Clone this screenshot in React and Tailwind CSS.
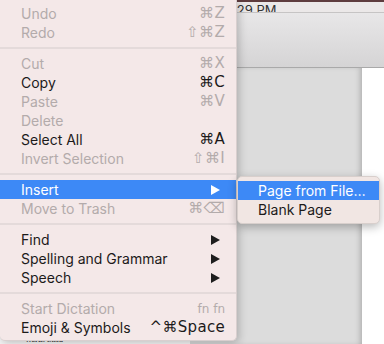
const FONT = { fontFamily: 'Inter, "DejaVu Sans", sans-serif' }

// ─── Menu data ────────────────────────────────────────────────────────────────

const ITEMS = [
  { label: 'Undo', key: '⌘Z', disabled: true },
  { label: 'Redo', key: '⇧⌘Z', disabled: true },
  { sep: true },
  { label: 'Cut', key: '⌘X', disabled: true },
  { label: 'Copy', key: '⌘C' },
  { label: 'Paste', key: '⌘V', disabled: true },
  { label: 'Delete', disabled: true },
  { label: 'Select All', key: '⌘A' },
  { label: 'Invert Selection', key: '⇧⌘I', disabled: true },
  { sep: true },
  { label: 'Insert', sub: true, active: true },
  { label: 'Move to Trash', key: '⌘⌫', disabled: true },
  { sep: true },
  { label: 'Find', sub: true },
  { label: 'Spelling and Grammar', sub: true },
  { label: 'Speech', sub: true },
  { sep: true },
  { label: 'Start Dictation', key: 'fn fn', disabled: true, small: true },
  { label: 'Emoji & Symbols', key: '^⌘Space' },
]

function Arrow({ white }) {
  return (
    <svg width="9" height="10" viewBox="0 0 9 10" className="shrink-0">
      <polygon points="0,0 9,5 0,10" fill={white ? '#ffffff' : '#1e1e1e'} />
    </svg>
  )
}

function Row({ item }) {
  const color = item.active ? 'text-white' : item.disabled ? 'text-[#b3abab]' : 'text-[#1c1a1a]'
  return (
    <div className={`h-[19px] flex items-center justify-between pl-[21px] pr-[11px] text-[14px] ${color} ${item.active ? 'bg-[#3d89f6]' : ''}`}>
      <span className="-mt-px">{item.label}</span>
      {item.sub && <span className="pr-[5px]"><Arrow white={item.active} /></span>}
      {item.key && (
        <span
          className={item.small ? 'text-[12px]' : 'text-[15px] tracking-[0.3px]'}
          style={{ fontFamily: '"DejaVu Sans", Inter, sans-serif' }}
        >
          {item.key}
        </span>
      )}
    </div>
  )
}

export default function App() {
  return (
    <div className="relative w-[384px] h-[344px] overflow-hidden bg-white" style={FONT}>

      {/* Backdrop — the app window behind the menu */}
      <div className="flex flex-col h-full">
        <div className="h-[2px] bg-[#5e3c3e]" />
        <div className="h-[10px] bg-[#ebe8e8] overflow-hidden pl-[233px]">
          <span className="block text-[13px] leading-[15px] text-[#333] mt-[1px]">:29 PM</span>
        </div>
        <div className="h-px bg-[#c6c4c4]" />
        <div className="h-[54px] bg-gradient-to-b from-[#e8e7e8] to-[#d5d4d5]" />
        <div className="h-px bg-[#a9a9a9]" />
        <div className="flex flex-1">
          <div className="w-[362px] bg-[#dcdcdc] shadow-[inset_-4px_0_6px_-3px_rgba(0,0,0,0.25)] flex flex-col justify-end">
            <div className="w-[190px] h-[8px] bg-[#f4f4f4] pl-[25px]">
              <span className="block text-[7px] leading-[8px] font-bold text-[#333]" style={{ fontFamily: '"Liberation Serif", serif' }}>Works Cited</span>
            </div>
          </div>
          <div className="flex-1 bg-white" />
        </div>
      </div>

      {/* Edit menu */}
      <div className="absolute left-0 top-0 w-[237px] pt-[4px] pb-[3px] bg-[#f4e8e8] rounded-b-[5px] shadow-[2px_2px_8px_rgba(0,0,0,0.22)] border-r border-b border-[#d9cfcf]">
        {ITEMS.map((item, i) =>
          item.sep ? (
            <div key={i} className="h-[12px] flex items-center">
              <div className="w-full h-[2px] bg-[#e4dada]" />
            </div>
          ) : (
            <Row key={i} item={item} />
          )
        )}
      </div>

      {/* Insert submenu */}
      <div className="absolute left-[237px] top-[176px] w-[143px] py-[4px] bg-[#f1e6e3] rounded-[5px] shadow-[0_3px_10px_rgba(0,0,0,0.28)] border border-[#d8cfcc]">
        <div className="h-[19px] flex items-center pl-[20px] text-[14px] text-white bg-[#3d89f6]">Page from File…</div>
        <div className="h-[19px] flex items-center pl-[20px] text-[14px] text-[#1c1a1a]">Blank Page</div>
      </div>
    </div>
  )
}
